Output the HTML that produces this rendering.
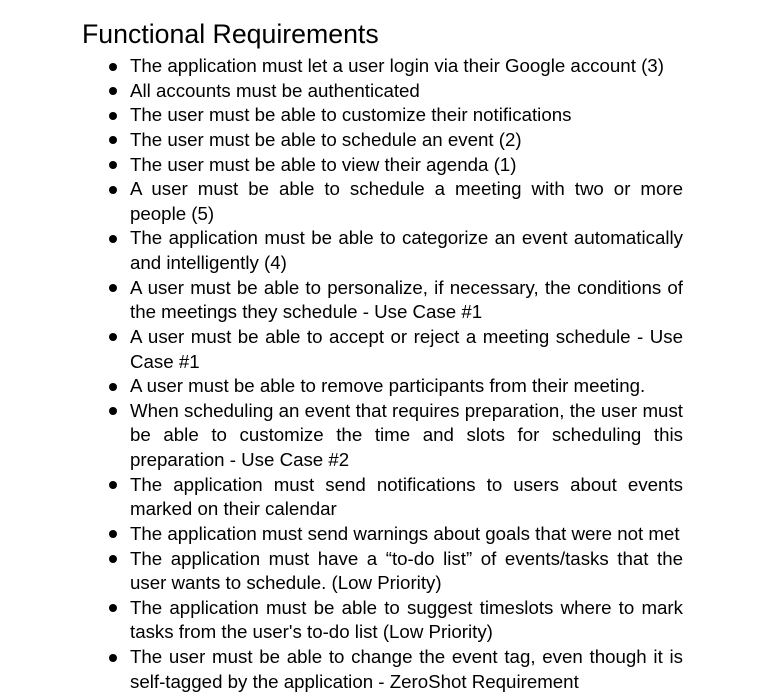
<!DOCTYPE html>
<html><head><meta charset="utf-8"><style>
body{margin:0;background:#fff;width:762px;height:688px;overflow:hidden;font-family:"Liberation Sans",Arial,sans-serif;color:#000;}
h1{position:absolute;left:82px;top:19px;margin:0;font-weight:normal;font-size:26.7px;line-height:31px;white-space:nowrap;}
#l{position:absolute;left:0;top:54px;width:762px;font-size:18.7px;line-height:24.64px;}
.r{position:relative;height:24.64px;margin-left:130px;width:553px;white-space:nowrap;}
.j{text-align:justify;text-align-last:justify;white-space:normal;}
.b::before{content:"";position:absolute;left:-21px;top:8.5px;width:8px;height:8px;border-radius:50%;background:#000;}
</style></head><body>
<h1>Functional Requirements</h1>
<div id="l">
<div class="r b">The application must let a user login via their Google account (3)</div>
<div class="r b">All accounts must be authenticated</div>
<div class="r b">The user must be able to customize their notifications</div>
<div class="r b">The user must be able to schedule an event (2)</div>
<div class="r b">The user must be able to view their agenda (1)</div>
<div class="r b j">A user must be able to schedule a meeting with two or more</div>
<div class="r">people (5)</div>
<div class="r b j">The application must be able to categorize an event automatically</div>
<div class="r">and intelligently (4)</div>
<div class="r b j">A user must be able to personalize, if necessary, the conditions of</div>
<div class="r">the meetings they schedule - Use Case #1</div>
<div class="r b j">A user must be able to accept or reject a meeting schedule - Use</div>
<div class="r">Case #1</div>
<div class="r b">A user must be able to remove participants from their meeting.</div>
<div class="r b j">When scheduling an event that requires preparation, the user must</div>
<div class="r j">be able to customize the time and slots for scheduling this</div>
<div class="r">preparation - Use Case #2</div>
<div class="r b j">The application must send notifications to users about events</div>
<div class="r">marked on their calendar</div>
<div class="r b">The application must send warnings about goals that were not met</div>
<div class="r b j">The application must have a “to-do list” of events/tasks that the</div>
<div class="r">user wants to schedule. (Low Priority)</div>
<div class="r b j">The application must be able to suggest timeslots where to mark</div>
<div class="r">tasks from the user's to-do list (Low Priority)</div>
<div class="r b j">The user must be able to change the event tag, even though it is</div>
<div class="r">self-tagged by the application - ZeroShot Requirement</div>
</div>
</body></html>
